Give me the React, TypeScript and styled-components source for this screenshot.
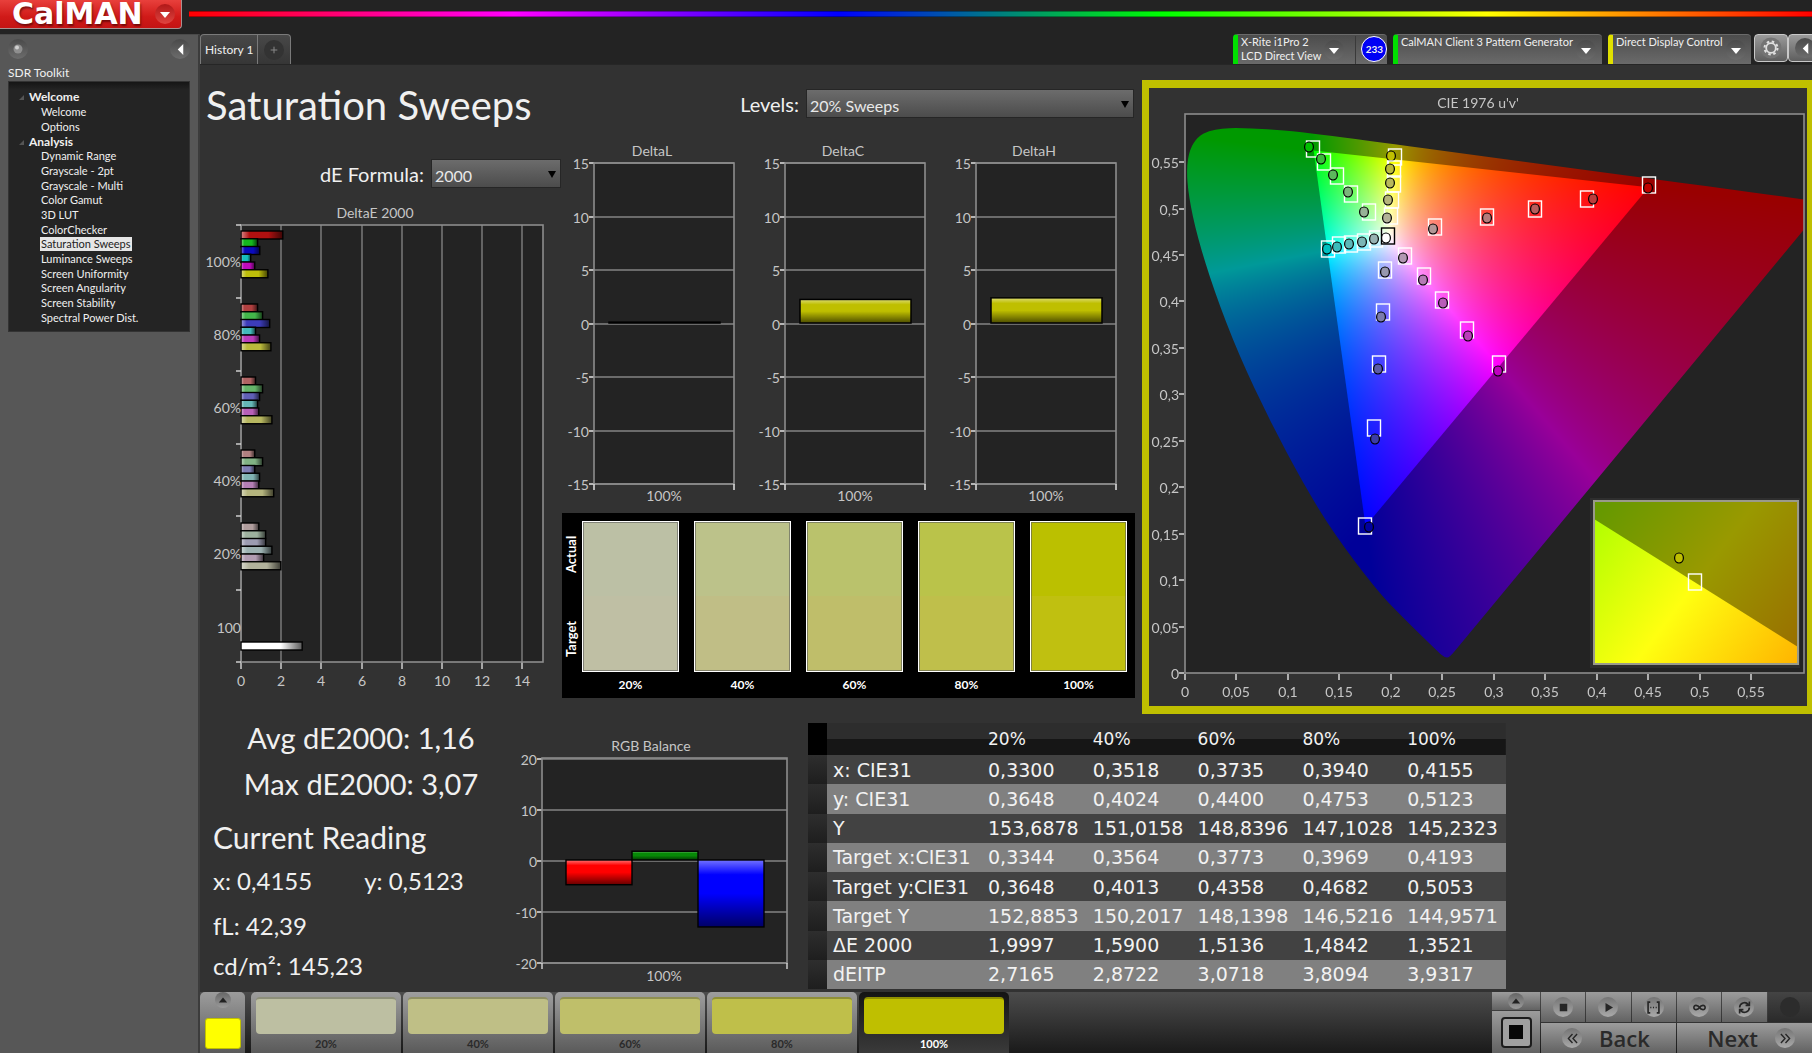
import React, { useLayoutEffect, useRef } from 'react';
import styled, { createGlobalStyle } from 'styled-components';

const GlobalStyle = createGlobalStyle`
  * { box-sizing: border-box; }
  body { margin: 0; background: #232323; color: #f0f0f0; font-family: Lato, 'Noto Sans', sans-serif; font-size: 14px; }
  button, select { font: inherit; color: inherit; margin: 0; padding: 0; border: 0; }
  ul { list-style: none; margin: 0; padding: 0; }
  h1, h2, p { margin: 0; font-weight: 400; }
  svg, canvas { display: block; }
`;

/* ---------- shell ---------- */

const Shell = styled.div`
  min-height: 100vh;
  display: flex;
  flex-direction: column;
  overflow: hidden;
`;

const TopBar = styled.header`
  display: flex;
  height: 34px;
`;

const Logo = styled.button`
  display: flex;
  align-items: center;
  gap: 12px;
  width: 182px;
  height: 29px;
  padding: 0 6px 0 12px;
  background: linear-gradient(#e8403c, #d01a18 60%, #c41414);
  border: solid #a89090;
  border-width: 0 1px 1px 0;
  border-radius: 0 0 4px 0;
  font: bold 30px/28px 'DejaVu Sans', sans-serif;
  color: #fff;
  text-shadow: 1px 2px 2px rgba(60, 0, 0, 0.6);
`;

const Rainbow = styled.div`
  flex: 1;
  height: 6px;
  margin: 11px 0 0 7px;
  background: linear-gradient(90deg, #f00, #f0f 20%, #00f 40%, #0f0 60%, #ff0 80%, #f00);
  border: solid rgba(0, 0, 0, 0.35);
  border-width: 1px 0;
`;

const Body = styled.div`
  flex: 1;
  display: flex;
`;

/* ---------- sidebar ---------- */

const Sidebar = styled.nav`
  width: 200px;
  flex: none;
  padding: 4px 8px 0;
  background: #575757;
  border-top: 1px solid #4a4a4a;
  border-right: 2px solid #3c3c3c;
`;

const SidebarTools = styled.div`
  display: flex;
  justify-content: space-between;
  height: 20px;
`;

const RoundButton = styled.button<{ $tone?: string }>`
  display: grid;
  place-items: center;
  flex: none;
  width: 20px;
  height: 20px;
  border-radius: 50%;
  background: ${(p) => p.$tone || 'linear-gradient(#4a4a4a, #6c6c6c)'};
`;

const ToolkitName = styled.h2`
  margin-top: 5px;
  font-size: 12px;
  line-height: 17px;
  color: #f0f0f0;
`;

const Tree = styled.div`
  height: 251px;
  padding: 8px 0 0 9px;
  background: linear-gradient(#151515, #242424 8px);
  border: 1px solid #333;
`;

const TreeGroup = styled.button`
  display: flex;
  align-items: center;
  gap: 5px;
  height: 14px;
  font-size: 12px;
  font-weight: 700;
  line-height: 14px;
  background: none;
`;

const TreeItems = styled.ul<{ $height: number }>`
  display: grid;
  grid-auto-rows: 1fr;
  align-items: center;
  height: ${(p) => p.$height}px;
  padding-left: 22px;
`;

const TreeLink = styled.a<{ $active?: boolean }>`
  display: block;
  width: fit-content;
  padding: 0 1px;
  font-size: 11px;
  line-height: 14px;
  white-space: nowrap;
  text-decoration: none;
  color: ${(p) => (p.$active ? '#222' : '#f0f0f0')};
  background: ${(p) => (p.$active ? '#e6e6e6' : 'none')};
`;

/* ---------- tabs and devices ---------- */

const Main = styled.main`
  flex: 1;
  min-width: 0;
  display: flex;
  flex-direction: column;
`;

const TabRow = styled.div`
  display: flex;
  height: 30px;
`;

const HistoryTabs = styled.div`
  display: flex;
  margin-right: auto;
  border: 1px solid #7a7a7a;
  border-bottom: 0;
  border-radius: 4px 4px 0 0;
  background: linear-gradient(#484848, #363636);
`;

const HistoryTab = styled.button`
  padding: 0 5px 0 4px;
  width: 57px;
  font-size: 12px;
  white-space: nowrap;
  background: none;
  border-right: 1px solid #7a7a7a;
`;

const AddTab = styled.button`
  display: grid;
  place-items: center;
  width: 32px;
  background: none;
`;

const Device = styled.div<{ $accent: string; $width: number }>`
  display: flex;
  gap: 3px;
  width: ${(p) => p.$width}px;
  margin-right: 6px;
  padding: 0 8px 0 3px;
  background: linear-gradient(#4c4c4c, #6a6a6a);
  border-left: 5px solid ${(p) => p.$accent};
  border-top: 1px solid #6a6a6a;
  border-radius: 4px 4px 0 0;
`;

const DeviceName = styled.div`
  flex: 1;
  font-size: 11px;
  line-height: 14px;
  white-space: nowrap;
`;

const DeviceArrow = styled(RoundButton)`
  margin-top: 5px;
`;

const Reading = styled.div`
  display: flex;
  margin: 1px -3px 0 8px;
  padding-left: 5px;
  border-left: 1px solid #3a3a3a;
`;

const ReadingBadge = styled.span`
  width: 26px;
  height: 26px;
  border: 1px solid #fff;
  border-radius: 50%;
  background: #0000f5;
  font-size: 10px;
  font-weight: 700;
  line-height: 24px;
  text-align: center;
`;

const SquareTool = styled.button`
  display: grid;
  place-items: center;
  flex: none;
  width: 34px;
  height: 28px;
  border: 1px solid #c8c8c8;
  border-radius: 4px;
  background: linear-gradient(#9a9a9a, #5e5e5e);
`;

const ToolGroup = styled.div`
  display: flex;
  width: 58px;
  margin-left: -3px;
  overflow: hidden;
`;

/* ---------- workspace ---------- */

const Workspace = styled.div`
  flex: 1;
  background: #323232;
  border-top: 1px solid #262626;
  padding-top: 15px;
`;

const UpperRow = styled.div`
  display: grid;
  grid-template-columns: minmax(0, 362fr) minmax(0, 580fr) minmax(0, 670fr);
  align-items: start;
`;

const PageTitle = styled.h1`
  padding-left: 6px;
  font-size: 40px;
  line-height: 50px;
  white-space: nowrap;
`;

const Field = styled.div<{ $top: number; $right: number }>`
  display: flex;
  justify-content: flex-end;
  align-items: center;
  gap: 7px;
  height: 29px;
  margin: ${(p) => p.$top}px ${(p) => p.$right}px 0 0;
`;

const FieldLabel = styled.label`
  font-size: 20px;
  line-height: 24px;
  white-space: nowrap;
`;

const SelectBox = styled.span<{ $width: number }>`
  position: relative;
  width: ${(p) => p.$width}px;
  height: 29px;
  &::after {
    content: '';
    position: absolute;
    right: 5px;
    top: 12px;
    border: 4px solid transparent;
    border-top: 7px solid #000;
    border-bottom: 0;
    pointer-events: none;
  }
`;

const Select = styled.select`
  appearance: none;
  width: 100%;
  height: 100%;
  padding: 3px 0 0 3px;
  font-size: 16px;
  color: #e8e8e8;
  background: linear-gradient(#6c6c6c, #4c4c4c);
  border: 1px solid #262626;
  border-radius: 0;
`;

const Drawing = styled.svg`
  width: 100%;
  height: auto;
  font-size: 14px;
  fill: #c6c6c6;
`;

const ChartSlot = styled.div<{ $top: number }>`
  margin-top: ${(p) => p.$top}px;
`;

const DeltaRow = styled.div`
  display: grid;
  grid-template-columns: repeat(3, minmax(0, 1fr));
  margin: 22px 7px 0 0;
`;

const SwatchPanel = styled.div`
  display: grid;
  grid-template-columns: 20px 1fr;
  height: 185px;
  margin: 7px 7px 0 0;
  padding: 8px 8px 0 0;
  background: #000;
  color: #fff;
`;

const SwatchAxis = styled.div`
  display: flex;
  flex-direction: column;
  justify-content: space-between;
  height: 151px;
  font-size: 13px;
  font-weight: 700;
`;

const AxisWord = styled.span`
  height: 66px;
  writing-mode: vertical-rl;
  transform: rotate(180deg);
  line-height: 18px;
  text-align: center;
`;

const SwatchList = styled.div`
  display: grid;
  grid-template-columns: repeat(5, 1fr);
  gap: 15px;
`;

const SwatchItem = styled.div`
  font-size: 12px;
  font-weight: 700;
  line-height: 26px;
  text-align: center;
`;

const SwatchColor = styled.div<{ $actual: string; $target: string }>`
  height: 151px;
  border: 1px solid #fff;
  box-shadow: inset 0 0 0 1px rgba(90, 90, 90, 0.6);
  background: linear-gradient(${(p) => p.$actual} 50%, ${(p) => p.$target} 50%);
`;

const CiePanel = styled.section`
  display: grid;
  background: #323232;
  border: solid #bfbf00;
  border-width: 8px 5px 8px 7px;
  & > * { grid-area: 1 / 1; width: 100%; }
`;

const CieCanvas = styled.canvas`
  height: auto;
`;

/* ---------- lower row ---------- */

const LowerRow = styled.div`
  display: flex;
`;

const Stats = styled.section`
  width: 300px;
  flex: none;
  white-space: nowrap;
`;

const Summary = styled.div`
  padding: 1px 0 0 22px;
  text-align: center;
  font-size: 29px;
  line-height: 46px;
`;

const ReadingBlock = styled.div`
  padding: 7px 0 0 13px;
  font-size: 24px;
  line-height: 40px;
`;

const ReadingTitle = styled.h2`
  font-size: 30px;
  line-height: 47px;
`;

const Pair = styled.div`
  display: flex;
  gap: 52px;
  margin-bottom: 5px;
`;

const RgbSlot = styled.div`
  width: 300px;
  flex: none;
  padding-top: 8px;
`;

const DataTable = styled.table`
  align-self: flex-start;
  width: 698px;
  height: 266px;
  margin: 9px 0 0 8px;
  border-collapse: collapse;
  table-layout: fixed;
  font: 19px/28px 'DejaVu Sans', sans-serif;
  color: #f2f2f2;
  white-space: nowrap;
`;

const Column = styled.col<{ $width?: number }>`
  width: ${(p) => (p.$width ? `${p.$width}px` : 'auto')};
`;

const HeadRow = styled.tr`
  height: 32px;
  background: linear-gradient(#2d2d2d 50%, #161616 50%);
`;

const DataRow = styled.tr`
  background: #424242;
  &:nth-child(even) { background: #808080; }
`;

const Cell = styled.td`
  padding: 0 0 0 6px;
`;

const HeadCell = styled.th<{ $corner?: boolean }>`
  padding: 0 0 0 6px;
  font-size: 17px;
  font-weight: 400;
  text-align: left;
  background: ${(p) => (p.$corner ? '#000' : 'none')};
`;

const RowHead = styled.th`
  padding: 0 0 0 6px;
  font-weight: 400;
  text-align: left;
`;

const Handle = styled.td`
  padding: 0;
  background: linear-gradient(#2e2e2e, #1e1e1e);
`;

/* ---------- bottom bar ---------- */

const BottomBar = styled.footer`
  display: flex;
  height: 61px;
  background: linear-gradient(#4c4c4c, #1a1a1a);
`;

const Preview = styled.div`
  display: flex;
  flex-direction: column;
  align-items: center;
  width: 45px;
  margin-right: 6px;
  border-radius: 5px 5px 0 0;
  background: linear-gradient(#9c9c9c, #5a5a5a);
`;

const MiniUp = styled(RoundButton)`
  width: 16px;
  height: 16px;
  background: linear-gradient(#666, #9a9a9a);
`;

const PreviewColor = styled.div`
  width: 36px;
  height: 31px;
  margin-top: 10px;
  border: 1px solid #c0c000;
  border-radius: 3px;
  background: #ff0;
`;

const Step = styled.button<{ $active?: boolean }>`
  width: 150px;
  margin-right: 2px;
  padding: 5px 5px 0;
  border-radius: 5px 5px 0 0;
  background: ${(p) => (p.$active ? 'linear-gradient(#141414, #3a3a3a)' : 'linear-gradient(#9e9e9e, #5a5a5a)')};
  font-size: 11px;
  font-weight: 700;
  line-height: 20px;
  color: ${(p) => (p.$active ? '#fff' : '#2a2a2a')};
`;

const StepColor = styled.span<{ $color: string }>`
  display: block;
  height: 37px;
  border-radius: 4px;
  border-top: 2px solid rgba(0, 0, 0, 0.25);
  background: ${(p) => p.$color};
  background-clip: border-box;
`;

const Transport = styled.div`
  display: flex;
  gap: 1px;
  width: 320px;
  margin-left: auto;
`;

const SourceColumn = styled.div`
  display: grid;
  grid-template-rows: 18px 1fr;
  gap: 1px;
  width: 48px;
`;

const GreyCell = styled.button<{ $off?: boolean }>`
  display: flex;
  align-items: center;
  justify-content: center;
  background: ${(p) => (p.$off ? 'linear-gradient(#444, #2a2a2a)' : 'linear-gradient(#9c9c9c, #626262)')};
`;

const NavCell = styled(GreyCell)<{ $end?: boolean }>`
  justify-content: ${(p) => (p.$end ? 'flex-end' : 'flex-start')};
  gap: 17px;
  padding: 0 17px 0 21px;
`;

const StopFrame = styled.span`
  display: grid;
  place-items: center;
  width: 31px;
  height: 31px;
  border: 2px solid #1c1c1c;
  border-radius: 4px;
  background: #a0a0a0;
`;

const ControlGrid = styled.div`
  flex: 1;
  display: grid;
  grid-template-rows: 30px 30px;
  gap: 1px;
`;

const ControlLine = styled.div<{ $cols: number }>`
  display: grid;
  grid-template-columns: repeat(${(p) => p.$cols}, 1fr);
  gap: 1px;
`;

const NavText = styled.span`
  font: 600 22px/28px 'Open Sans', 'Noto Sans', sans-serif;
  color: #2a2a2a;
`;

const Disc = styled.span<{ $off?: boolean }>`
  display: grid;
  place-items: center;
  width: 20px;
  height: 20px;
  border-radius: 50%;
  background: ${(p) => (p.$off ? '#2c2c2c' : 'linear-gradient(#747474, #aaa)')};
`;

/* ---------- glyphs ---------- */

const Glyph = ({ d, size = 12, fill = '#fff', stroke }: { d: string; size?: number; fill?: string; stroke?: string }) => (
  <svg width={size} height={size} viewBox="0 0 12 12" aria-hidden="true">
    <path d={d} fill={stroke ? 'none' : fill} stroke={stroke} strokeWidth={stroke ? 1.5 : 0} />
  </svg>
);

const DOWN = 'M1 4H11L6 10Z';
const LEFT = 'M9 0V12L3 6Z';
const UP = 'M1 9H11L6 3Z';

/* ---------- DeltaE chart ---------- */

type Rgb = [number, number, number];
const HUES: Rgb[] = [[176, 16, 16], [20, 184, 30], [10, 10, 190], [20, 190, 190], [190, 10, 190], [190, 190, 10]];
const GREY = 176;

const fade = (c: Rgb, s: number) => `rgb(${c.map((v) => Math.round(GREY + (v - GREY) * s)).join(',')})`;

const DELTA_E = [
  { label: '100%', sat: 1, top: 31, values: [2.07, 0.82, 0.93, 0.48, 0.68, 1.33] },
  { label: '80%', sat: 0.7, top: 104, values: [0.82, 1.07, 1.42, 0.72, 0.92, 1.48] },
  { label: '60%', sat: 0.48, top: 177, values: [0.72, 1.07, 0.92, 0.82, 0.88, 1.53] },
  { label: '40%', sat: 0.3, top: 250, values: [0.68, 1.07, 0.68, 0.92, 0.88, 1.62] },
  { label: '20%', sat: 0.12, top: 323, values: [0.88, 1.22, 1.22, 1.53, 1.12, 1.97] },
];

const HBar = ({ y, value, color }: { y: number; value: number; color: string }) => (
  <g>
    <rect x={41} y={y} width={value * 20.2} height={8} fill={color} />
    <rect x={41} y={y} width={value * 20.2} height={8} fill="url(#hshade)" stroke="#000" strokeWidth={1.4} />
  </g>
);

const DeltaEChart = () => (
  <Drawing viewBox="0 0 362 500" role="img" aria-label="DeltaE 2000">
    <defs>
      <linearGradient id="hshade">
        <stop offset="0" stopColor="#fff" stopOpacity="0.5" />
        <stop offset="0.2" stopColor="#fff" stopOpacity="0" />
        <stop offset="0.65" stopColor="#000" stopOpacity="0" />
        <stop offset="1" stopColor="#000" stopOpacity="0.65" />
      </linearGradient>
    </defs>
    <text x={175} y={18} textAnchor="middle">DeltaE 2000</text>
    <rect x={41} y={25} width={302} height={437} fill="#232323" />
    {[0, 2, 4, 6, 8, 10, 12, 14].map((n) => {
      const x = Math.round(41 + n * 20.1);
      return (
        <g key={n}>
          <path d={`M${x} 25V462`} stroke="#808080" strokeWidth={1.4} />
          <path d={`M${x} 462v7`} stroke="#d8d8d8" strokeWidth={1.4} />
          <text x={x} y={486} textAnchor="middle">{n}</text>
        </g>
      );
    })}
    <rect x={41} y={25} width={302} height={437} fill="none" stroke="#8c8c8c" strokeWidth={1.6} />
    {[25, 98, 171, 244, 316, 390, 462].map((y) => (
      <path key={y} d={`M36 ${y}h5`} stroke="#d8d8d8" strokeWidth={1.4} />
    ))}
    {DELTA_E.map((g) => g.values.map((v, i) => (
      <HBar key={g.label + i} y={g.top + i * 7.75} value={v} color={fade(HUES[i], g.sat)} />
    )))}
    <HBar y={442} value={3.03} color="#fff" />
    {DELTA_E.map((g, i) => (
      <text key={g.label} x={41} y={67 + i * 73} textAnchor="end">{g.label}</text>
    ))}
    <text x={41} y={433} textAnchor="end">100</text>
  </Drawing>
);

/* ---------- vertical bar charts ---------- */

const VShade = ({ id }: { id: string }) => (
  <linearGradient id={id} x1="0" y1="0" x2="0" y2="1">
    <stop offset="0" stopColor="#fff" stopOpacity="0.45" />
    <stop offset="0.22" stopColor="#fff" stopOpacity="0" />
    <stop offset="0.5" stopColor="#000" stopOpacity="0" />
    <stop offset="1" stopColor="#000" stopOpacity="0.6" />
  </linearGradient>
);

const DeltaChart = ({ title, value }: { title: string; value: number }) => {
  const h = value * 10.7;
  return (
    <Drawing viewBox="0 0 191 366" role="img" aria-label={title}>
      <defs><VShade id={`v${title}`} /></defs>
      <text x={90} y={16} textAnchor="middle">{title}</text>
      <rect x={32} y={23} width={140} height={321} fill="#232323" />
      {[15, 10, 5, 0, -5, -10, -15].map((n) => {
        const y = Math.round(183.8 - n * 10.7);
        return (
          <g key={n}>
            <path d={`M32 ${y}h140`} stroke="#858585" strokeWidth={1.6} />
            <path d={`M27 ${y}h5`} stroke="#d8d8d8" strokeWidth={1.6} />
            <text x={27} y={y + 6} textAnchor="end">{n}</text>
          </g>
        );
      })}
      <rect x={32} y={23} width={140} height={321} fill="none" stroke="#8c8c8c" strokeWidth={1.6} />
      <path d="M32 344v6M172 344v6" stroke="#d8d8d8" strokeWidth={1.6} />
      <rect x={47} y={183 - h} width={111} height={h} fill="#bfbf00" />
      <rect x={47} y={183 - h} width={111} height={h} fill={`url(#v${title})`} stroke="#000" strokeWidth={1.5} />
      <text x={102} y={361} textAnchor="middle">100%</text>
    </Drawing>
  );
};

const RGB_BARS = [
  { x: 66, value: -4.8, color: '#ff0000' },
  { x: 132, value: 1.7, color: '#078a07' },
  { x: 198, value: -13, color: '#0000ff' },
];

const RgbChart = () => (
  <Drawing viewBox="0 0 300 264" role="img" aria-label="RGB Balance">
    <defs><VShade id="vrgb" /></defs>
    <text x={151} y={29} textAnchor="middle">RGB Balance</text>
    <rect x={42} y={36} width={245} height={205} fill="#232323" />
    {[20, 10, 0, -10, -20].map((n) => {
      const y = Math.round(138.5 - n * 5.1);
      return (
        <g key={n}>
          <path d={`M42 ${y}h245`} stroke="#858585" strokeWidth={1.6} />
          <path d={`M37 ${y}h5`} stroke="#d8d8d8" strokeWidth={1.6} />
          <text x={37} y={y + 6} textAnchor="end">{n}</text>
        </g>
      );
    })}
    <rect x={42} y={36} width={245} height={205} fill="none" stroke="#8c8c8c" strokeWidth={1.6} />
    <path d="M42 241v6M287 241v6" stroke="#d8d8d8" strokeWidth={1.4} />
    {RGB_BARS.map((b) => {
      const h = Math.abs(b.value) * 5.15;
      const y = b.value > 0 ? 138 - h : 138;
      return (
        <g key={b.x}>
          <rect x={b.x} y={y} width={66} height={h} fill={b.color} />
          <rect x={b.x} y={y} width={66} height={h} fill="url(#vrgb)" stroke="#000" strokeWidth={1.4} />
        </g>
      );
    })}
    <text x={164} y={259} textAnchor="middle">100%</text>
  </Drawing>
);

/* ---------- CIE diagram ---------- */

const CIE_W = 658;
const CIE_H = 618;
const LEFT_EDGE = 36;
const toX = (u: number) => LEFT_EDGE + 1029 * u;
const toY = (v: number) => 585 - 929 * v;

const LOCUS: [number, number][] = [
  [0.262, 0.0235], [0.2569, 0.0165], [0.2522, 0.0169], [0.2461, 0.0226], [0.2347, 0.035], [0.2161, 0.055],
  [0.1877, 0.0871], [0.1441, 0.151], [0.1147, 0.2044], [0.0828, 0.2708], [0.0521, 0.3427], [0.0282, 0.4117],
  [0.0119, 0.4699], [0.0035, 0.5131], [0.0014, 0.5432], [0.0046, 0.5638], [0.0123, 0.577], [0.0231, 0.5837],
  [0.036, 0.5861], [0.0501, 0.5868], [0.0792, 0.5856], [0.1127, 0.5821], [0.1531, 0.5766], [0.2026, 0.5694],
  [0.2623, 0.5604], [0.3315, 0.5501], [0.4035, 0.5393], [0.4692, 0.5296], [0.5203, 0.5219], [0.583, 0.5125],
  [0.6234, 0.5065],
];
const REC709: [number, number][] = [[0.4507, 0.5229], [0.125, 0.5625], [0.1754, 0.1579]];

function tracePath(ctx: CanvasRenderingContext2D, pts: [number, number][], smooth: boolean) {
  const p = pts.map(([u, v]) => [toX(u), toY(v)]);
  ctx.beginPath();
  ctx.moveTo(p[0][0], p[0][1]);
  for (let i = 1; i < p.length; i++) {
    if (smooth && i < p.length - 1) {
      ctx.quadraticCurveTo(p[i][0], p[i][1], (p[i][0] + p[i + 1][0]) / 2, (p[i][1] + p[i + 1][1]) / 2);
    } else {
      ctx.lineTo(p[i][0], p[i][1]);
    }
  }
  ctx.closePath();
}

function gamutLayer(level: number) {
  const layer = document.createElement('canvas');
  layer.width = CIE_W;
  layer.height = CIE_H;
  const ctx = layer.getContext('2d')!;
  const img = ctx.createImageData(CIE_W, CIE_H);
  for (let py = 0; py < CIE_H; py++) {
    const v = Math.max((585 - py) / 929, 0.004);
    for (let px = 0; px < CIE_W; px++) {
      const u = (px - LEFT_EDGE) / 1029;
      const X = (9 * u) / (4 * v);
      const Z = (12 - 3 * u - 20 * v) / (4 * v);
      const rgb = [
        3.2406 * X - 1.5372 - 0.4986 * Z,
        -0.9689 * X + 1.8758 + 0.0415 * Z,
        0.0557 * X - 0.204 + 1.057 * Z,
      ].map((c) => Math.max(c, 0));
      const top = Math.max(rgb[0], rgb[1], rgb[2], 0.0001);
      const o = (py * CIE_W + px) * 4;
      for (let k = 0; k < 3; k++) img.data[o + k] = 255 * level * Math.pow(rgb[k] / top, 0.9);
      img.data[o + 3] = 255;
    }
  }
  ctx.putImageData(img, 0, 0);
  return layer;
}

type Mark = [number, number, number, number];
const MARKS: { hue: Rgb; points: Mark[] }[] = [
  { hue: [0, 192, 0], points: [[164, 61, 160, 59], [175, 74, 172, 71], [188, 88, 184, 87], [202, 106, 199, 104], [220, 124, 215, 124]] },
  { hue: [192, 192, 0], points: [[246, 69, 242, 68], [245, 81, 241, 81], [245, 96, 241, 95], [243, 112, 239, 112], [242, 128, 238, 130]] },
  { hue: [192, 0, 0], points: [[500, 97, 499, 100], [438, 111, 444, 111], [386, 121, 386, 121], [338, 129, 338, 130], [286, 139, 284, 141]] },
  { hue: [0, 192, 192], points: [[179, 161, 178, 161], [190, 157, 188, 159], [202, 156, 200, 156], [215, 154, 213, 154], [227, 151, 225, 151]] },
  { hue: [192, 0, 192], points: [[350, 276, 349, 283], [318, 242, 319, 248], [293, 212, 294, 215], [275, 188, 274, 192], [256, 168, 254, 170]] },
  { hue: [0, 0, 160], points: [[216, 438, 220, 439], [225, 340, 226, 351], [230, 276, 229, 281], [234, 224, 232, 229], [236, 182, 236, 184]] },
];
const SATS = [1, 0.66, 0.48, 0.3, 0.14];

const Marker = ({ mark, fill, stroke = '#fff' }: { mark: Mark; fill: string; stroke?: string }) => (
  <g strokeWidth={1.4}>
    <rect x={mark[0] - 6.5} y={mark[1] - 8} width={13} height={16} fill="none" stroke={stroke} />
    <ellipse cx={mark[2]} cy={mark[3]} rx={4.4} ry={5} fill={fill} stroke="#000" strokeWidth={1.2} />
  </g>
);

const comma = (n: number) => String(n / 100).replace('.', ',');

const CieChart = () => {
  const ref = useRef<HTMLCanvasElement>(null);
  useLayoutEffect(() => {
    const ctx = ref.current!.getContext('2d')!;
    ctx.fillStyle = '#232323';
    ctx.fillRect(LEFT_EDGE, 26, 619, 559);
    ctx.save();
    ctx.beginPath();
    ctx.rect(LEFT_EDGE, 26, 619, 559);
    ctx.clip();
    tracePath(ctx, LOCUS, true);
    ctx.clip();
    ctx.drawImage(gamutLayer(0.6), 0, 0);
    tracePath(ctx, REC709, false);
    ctx.clip();
    ctx.drawImage(gamutLayer(1), 0, 0);
    ctx.restore();
  }, []);

  return (
    <CiePanel>
      <CieCanvas ref={ref} width={CIE_W} height={CIE_H} />
      <Drawing viewBox={`0 0 ${CIE_W} ${CIE_H}`} role="img" aria-label="CIE 1976 chromaticity diagram">
        <defs>
          <linearGradient id="insetLight" gradientUnits="userSpaceOnUse" x1="455" y1="417" x2="655" y2="567">
            <stop offset="0" stopColor="#b0ff00" />
            <stop offset="0.48" stopColor="#ffff10" />
            <stop offset="1" stopColor="#ffb400" />
          </linearGradient>
          <linearGradient id="insetDark" gradientUnits="userSpaceOnUse" x1="455" y1="417" x2="655" y2="567">
            <stop offset="0" stopColor="#669900" />
            <stop offset="0.48" stopColor="#999900" />
            <stop offset="1" stopColor="#996c00" />
          </linearGradient>
        </defs>
        <text x={329} y={20} textAnchor="middle">CIE 1976 u'v'</text>
        <rect x={LEFT_EDGE} y={26} width={619} height={559} fill="none" stroke="#8c8c8c" strokeWidth={1.6} />
        {[0, 5, 10, 15, 20, 25, 30, 35, 40, 45, 50, 55].map((n) => {
          const x = Math.round(toX(n / 100));
          const y = Math.round(toY(n / 100));
          return (
            <g key={n}>
              <path d={`M${x} 586v6M30 ${y}h5`} stroke="#d8d8d8" strokeWidth={1.5} />
              <text x={x} y={609} textAnchor="middle">{comma(n)}</text>
              <text x={30} y={y + 6} textAnchor="end">{comma(n)}</text>
            </g>
          );
        })}
        {MARKS.map((m, k) => m.points.map((p, i) => {
          const c = m.hue.map((v) => Math.round(GREY + (v - GREY) * SATS[i])).join(',');
          return <Marker key={`${k}-${i}`} mark={p} fill={`rgb(${c})`} />;
        }))}
        <Marker mark={[239, 148, 237, 150]} fill="#fff" stroke="#000" />
        <rect x={441} y={410} width={210} height={170} fill="#2e2e2e" />
        <rect x={445} y={413} width={204} height={163} fill="url(#insetDark)" />
        <path d="M445 431L649 559V576H445Z" fill="url(#insetLight)" />
        <rect x={445} y={413} width={204} height={163} fill="none" stroke="#9a9a8a" strokeWidth={2} />
        <Marker mark={[546, 494, 530, 470]} fill="#bfbf00" />
      </Drawing>
    </CiePanel>
  );
};

/* ---------- data ---------- */

const LEVELS = ['20%', '40%', '60%', '80%', '100%'];
const ACTUAL = ['#bcc0a5', '#bcc28a', '#bac26c', '#bac34a', '#bbc000'];
const TARGET = ['#bfbfa4', '#c0be86', '#bfbe6a', '#bfbf4b', '#c0c010'];
const STEP_COLORS = ['#bdbfa2', '#bfbf86', '#bfbf6a', '#bfbf4a', '#bfbf00'];

const ROWS: [string, ...string[]][] = [
  ['x: CIE31', '0,3300', '0,3518', '0,3735', '0,3940', '0,4155'],
  ['y: CIE31', '0,3648', '0,4024', '0,4400', '0,4753', '0,5123'],
  ['Y', '153,6878', '151,0158', '148,8396', '147,1028', '145,2323'],
  ['Target x:CIE31', '0,3344', '0,3564', '0,3773', '0,3969', '0,4193'],
  ['Target y:CIE31', '0,3648', '0,4013', '0,4358', '0,4682', '0,5053'],
  ['Target Y', '152,8853', '150,2017', '148,1398', '146,5216', '144,9571'],
  ['ΔE 2000', '1,9997', '1,5900', '1,5136', '1,4842', '1,3521'],
  ['dEITP', '2,7165', '2,8722', '3,0718', '3,8094', '3,9317'],
];

const WELCOME = ['Welcome', 'Options'];
const ANALYSIS = [
  'Dynamic Range', 'Grayscale - 2pt', 'Grayscale - Multi', 'Color Gamut', '3D LUT', 'ColorChecker',
  'Saturation Sweeps', 'Luminance Sweeps', 'Screen Uniformity', 'Screen Angularity', 'Screen Stability',
  'Spectral Power Dist.',
];

const Group = ({ name, items, height }: { name: string; items: string[]; height: number }) => (
  <>
    <TreeGroup>
      <Glyph d="M12 2V12H2Z" size={6} fill="#555" />
      {name}
    </TreeGroup>
    <TreeItems $height={height}>
      {items.map((t) => (
        <li key={t}><TreeLink href="#" $active={t === 'Saturation Sweeps'}>{t}</TreeLink></li>
      ))}
    </TreeItems>
  </>
);

const Arrow = ({ label }: { label: string }) => (
  <DeviceArrow aria-label={label}><Glyph d={DOWN} size={12} /></DeviceArrow>
);

const TRANSPORT = [
  { name: 'Stop', d: 'M1 1H11V11H1Z', fill: true },
  { name: 'Play', d: 'M2 0L12 6L2 12Z', fill: true },
  { name: 'Read series', d: 'M3 1H1V11H3M9 1H11V11H9M3 6H4M5.5 6H6.5M8 6H9', fill: false },
  { name: 'Continuous', d: 'M6 6C4.5 3.5 0.8 3.2 0.8 6S4.500 8.500 6 6C7.500 3.500 11.200 3.200 11.200 6S7.500 8.500 6 6', fill: false },
  { name: 'Refresh', d: 'M1.500 6A4.500 4.500 0 0 1 9.500 3.200M10.500 0.500V4H7M10.500 6A4.500 4.500 0 0 1 2.500 8.800M1.500 11.500V8H5', fill: false },
];

export default function App() {
  return (
    <Shell>
      <GlobalStyle />
      <TopBar>
        <Logo>
          CalMAN
          <RoundButton as="span" $tone="linear-gradient(#b01818, #e04440)"><Glyph d={DOWN} /></RoundButton>
        </Logo>
        <Rainbow />
      </TopBar>
      <Body>
        <Sidebar>
          <SidebarTools>
            <RoundButton aria-label="Record">
              <svg width="10" height="10" viewBox="0 0 10 10"><circle cx="5" cy="5" r="4.500" fill="#8e8e8e" /><circle cx="4" cy="3.500" r="2" fill="#d0d0d0" /></svg>
            </RoundButton>
            <RoundButton aria-label="Collapse sidebar"><Glyph d={LEFT} size={11} /></RoundButton>
          </SidebarTools>
          <ToolkitName>SDR Toolkit</ToolkitName>
          <Tree>
            <Group name="Welcome" items={WELCOME} height={31} />
            <Group name="Analysis" items={ANALYSIS} height={176} />
          </Tree>
        </Sidebar>
        <Main>
          <TabRow>
            <HistoryTabs>
              <HistoryTab>History 1</HistoryTab>
              <AddTab aria-label="Add history">
                <RoundButton as="span" $tone="#333"><Glyph d="M6 1V11M1 6H11" size={8} stroke="#888" /></RoundButton>
              </AddTab>
            </HistoryTabs>
            <Device $accent="#00e000" $width={154}>
              <DeviceName>X-Rite i1Pro 2<br />LCD Direct View</DeviceName>
              <Arrow label="Meter menu" />
              <Reading><ReadingBadge>233</ReadingBadge></Reading>
            </Device>
            <Device $accent="#00e000" $width={209}>
              <DeviceName>CalMAN Client 3 Pattern Generator</DeviceName>
              <Arrow label="Source menu" />
            </Device>
            <Device $accent="#e0e000" $width={143}>
              <DeviceName>Direct Display Control</DeviceName>
              <Arrow label="Display menu" />
            </Device>
            <ToolGroup>
              <SquareTool aria-label="Settings">
                <svg width="22" height="22" viewBox="0 0 22 22">
                  <circle cx="11" cy="11" r="10.500" fill="#747474" />
                  <circle cx="11" cy="11" r="4.800" fill="none" stroke="#e0e0e0" strokeWidth="1.800" />
                  <circle cx="11" cy="11" r="6.500" fill="none" stroke="#e0e0e0" strokeWidth="2" strokeDasharray="2.500 2.600" />
                </svg>
              </SquareTool>
              <SquareTool aria-label="Collapse devices">
                <RoundButton as="span"><Glyph d={LEFT} size={11} /></RoundButton>
              </SquareTool>
            </ToolGroup>
          </TabRow>
          <Workspace>
            <UpperRow>
              <div>
                <PageTitle>Saturation Sweeps</PageTitle>
                <Field $top={29} $right={1}>
                  <FieldLabel htmlFor="formula">dE Formula:</FieldLabel>
                  <SelectBox $width={130}><Select id="formula"><option>2000</option></Select></SelectBox>
                </Field>
                <ChartSlot $top={12}><DeltaEChart /></ChartSlot>
              </div>
              <div>
                <Field $top={9} $right={8}>
                  <FieldLabel htmlFor="levels">Levels:</FieldLabel>
                  <SelectBox $width={328}><Select id="levels"><option>20% Sweeps</option></Select></SelectBox>
                </Field>
                <DeltaRow>
                  <DeltaChart title="DeltaL" value={0.08} />
                  <DeltaChart title="DeltaC" value={2.2} />
                  <DeltaChart title="DeltaH" value={2.35} />
                </DeltaRow>
                <SwatchPanel>
                  <SwatchAxis><AxisWord>Actual</AxisWord><AxisWord>Target</AxisWord></SwatchAxis>
                  <SwatchList>
                    {LEVELS.map((l, i) => (
                      <SwatchItem key={l}>
                        <SwatchColor $actual={ACTUAL[i]} $target={TARGET[i]} />
                        {l}
                      </SwatchItem>
                    ))}
                  </SwatchList>
                </SwatchPanel>
              </div>
              <CieChart />
            </UpperRow>
            <LowerRow>
              <Stats>
                <Summary>
                  <p>Avg dE2000: 1,16</p>
                  <p>Max dE2000: 3,07</p>
                </Summary>
                <ReadingBlock>
                  <ReadingTitle>Current Reading</ReadingTitle>
                  <Pair><span>x: 0,4155</span><span>y: 0,5123</span></Pair>
                  <p>fL: 42,39</p>
                  <p>cd/m²: 145,23</p>
                </ReadingBlock>
              </Stats>
              <RgbSlot><RgbChart /></RgbSlot>
              <DataTable>
                <colgroup>
                  <Column $width={19} />
                  <Column $width={155} />
                  {LEVELS.map((l) => <Column key={l} />)}
                </colgroup>
                <thead>
                  <HeadRow>
                    <HeadCell $corner />
                    <HeadCell />
                    {LEVELS.map((l) => <HeadCell key={l} scope="col">{l}</HeadCell>)}
                  </HeadRow>
                </thead>
                <tbody>
                  {ROWS.map(([name, ...cells]) => (
                    <DataRow key={name}>
                      <Handle />
                      <RowHead scope="row">{name}</RowHead>
                      {cells.map((c, i) => <Cell key={i}>{c}</Cell>)}
                    </DataRow>
                  ))}
                </tbody>
              </DataTable>
            </LowerRow>
          </Workspace>
          <BottomBar>
            <Preview>
              <MiniUp aria-label="Expand preview"><Glyph d={UP} size={10} fill="#222" /></MiniUp>
              <PreviewColor />
            </Preview>
            {LEVELS.map((l, i) => (
              <Step key={l} $active={i === 4}>
                <StepColor $color={STEP_COLORS[i]} />
                {l}
              </Step>
            ))}
            <Transport>
              <SourceColumn>
                <GreyCell aria-label="Expand source"><MiniUp as="span"><Glyph d={UP} size={10} fill="#222" /></MiniUp></GreyCell>
                <GreyCell aria-label="Source window"><StopFrame><Glyph d="M0 0H12V12H0Z" size={14} fill="#080808" /></StopFrame></GreyCell>
              </SourceColumn>
              <ControlGrid>
                <ControlLine $cols={6}>
                  {TRANSPORT.map((t) => (
                    <GreyCell key={t.name} aria-label={t.name}>
                      <Disc><Glyph d={t.d} size={t.fill ? 9 : 13} fill="#262626" stroke={t.fill ? undefined : '#262626'} /></Disc>
                    </GreyCell>
                  ))}
                  <GreyCell $off aria-label="Unavailable"><Disc $off /></GreyCell>
                </ControlLine>
                <ControlLine $cols={2}>
                  <NavCell>
                    <Disc><Glyph d="M6 1L1.500 6L6 11M11 1L6.500 6L11 11" size={11} stroke="#262626" /></Disc>
                    <NavText>Back</NavText>
                  </NavCell>
                  <NavCell $end>
                    <NavText>Next</NavText>
                    <Disc><Glyph d="M1 1L5.500 6L1 11M6 1L10.500 6L6 11" size={11} stroke="#262626" /></Disc>
                  </NavCell>
                </ControlLine>
              </ControlGrid>
            </Transport>
          </BottomBar>
        </Main>
      </Body>
    </Shell>
  );
}
